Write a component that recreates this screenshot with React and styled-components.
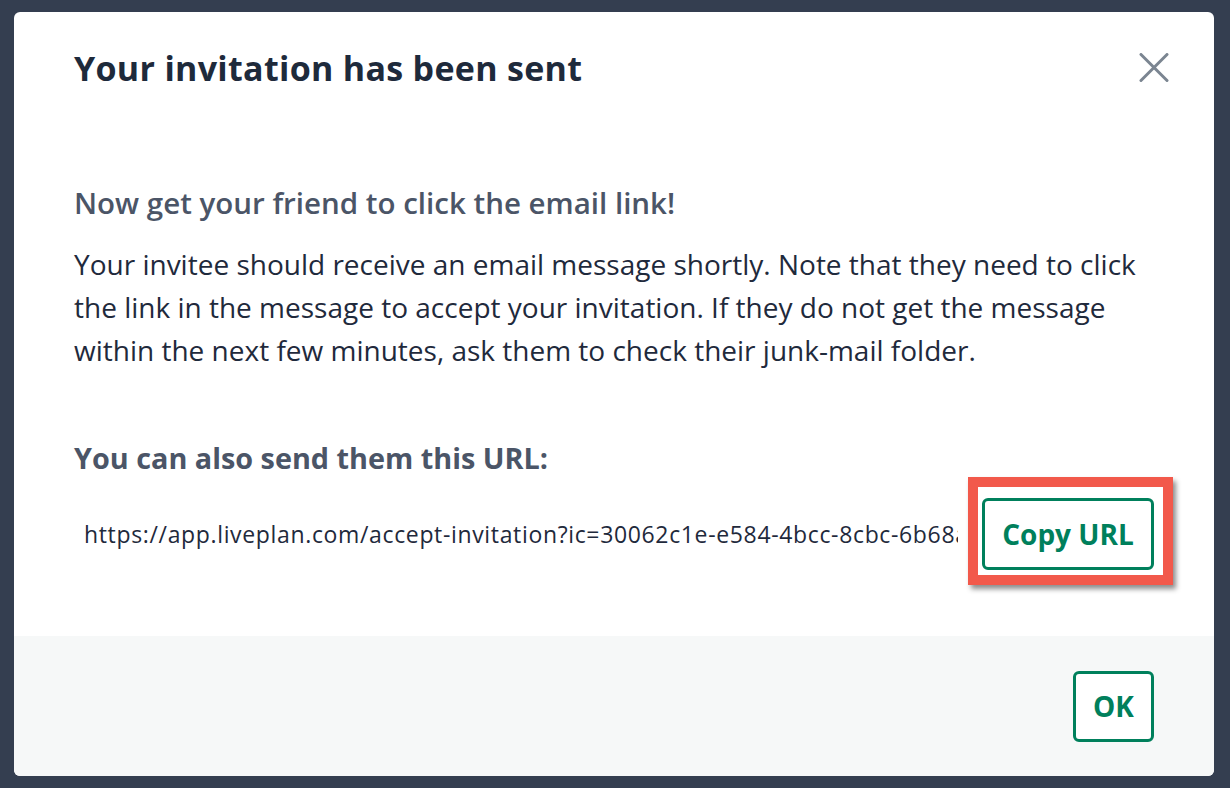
import React from 'react';
import styled, {createGlobalStyle} from 'styled-components';

const GlobalStyle = createGlobalStyle`
    html, body {
        margin: 0;
        padding: 0;
        background: #343e50;
        font-family: "Open Sans", Lato, sans-serif;
    }
`

const Backdrop = styled.div`
    height: 788px;
    padding: 12px 16px 12px 14px;
    box-sizing: border-box;
`

const Modal = styled.div`
    width: 1200px;
    height: 764px;
    background: #fff;
    border-radius: 6px;
    overflow: hidden;
    display: flex;
    flex-direction: column;
`

const Header = styled.div`
    display: flex;
    align-items: center;
    justify-content: space-between;
    padding: 36px 45px 0 60px;
    height: 40px;
`

const Title = styled.h2`
    margin: 0;
    font-size: 34px;
    line-height: 40px;
    font-weight: 700;
    letter-spacing: 0.3px;
    color: #1e2a3b;
`

const CloseButton = styled.button`
    border: 0;
    background: none;
    padding: 0;
    width: 30px;
    height: 30px;
    cursor: pointer;
    display: flex;
    align-items: center;
    justify-content: center;
`

const Body = styled.div`
    flex: 1;
    padding: 0 60px;
    display: flex;
    flex-direction: column;
`

const SubHeading = styled.h3`
    margin: ${p => p.$top}px 0 0;
    font-size: ${p => p.$size}px;
    font-weight: ${p => p.$weight || 700};
    color: #4b5567;
    line-height: 36px;
`

const Paragraph = styled.p`
    margin: 22px 0 0;
    font-size: 28px;
    line-height: 43px;
    color: #1f2a3c;
`

const UrlRow = styled.div`
    display: flex;
    align-items: center;
    gap: 24px;
    margin-top: 22px;
`

// read-only field: the long link is clipped at its right edge
const UrlField = styled.div`
    flex: 1;
    min-width: 0;
    padding: 0 10px;
    font-size: 23px;
    letter-spacing: 0.65px;
    color: #1f2a3c;
    white-space: nowrap;
    overflow: hidden;
`

const Highlight = styled.div`
    position: relative;
    flex-shrink: 0;
    &::after {
        content: '';
        position: absolute;
        left: -14px;
        top: -21px;
        right: -19px;
        bottom: -15px;
        border: 10px solid #f2594b;
        box-shadow: 3px 4px 5px rgba(0, 0, 0, 0.45);
        pointer-events: none;
    }
`

const OutlineButton = styled.button`
    box-sizing: border-box;
    width: ${p => p.$width}px;
    height: ${p => p.$height}px;
    padding: 0;
    border: 3px solid #00805c;
    border-radius: 6px;
    background: #fff;
    color: #00805c;
    font-family: inherit;
    font-size: 28px;
    font-weight: 700;
    cursor: pointer;
`

const Footer = styled.div`
    height: 140px;
    background: #f6f8f8;
    display: flex;
    align-items: center;
    justify-content: flex-end;
    padding: 0 60px;
`

const App = () => {
    return (
        <>
            <GlobalStyle/>
            <Backdrop>
                <Modal>
                    <Header>
                        <Title>Your invitation has been sent</Title>
                        <CloseButton aria-label="Close">
                            <svg width="30" height="30" viewBox="0 0 30 30">
                                <path d="M2 1.5 L28 27.5 M28 1.5 L2 27.5" stroke="#7b8591" strokeWidth="3" strokeLinecap="round"/>
                            </svg>
                        </CloseButton>
                    </Header>
                    <Body>
                        <SubHeading $top={97} $size={29.5} $weight={600}>Now get your friend to click the email link!</SubHeading>
                        <Paragraph>
                            Your invitee should receive an email message shortly. Note that they need to click<br/>
                            the link in the message to accept your invitation. If they do not get the message<br/>
                            within the next few minutes, ask them to check their junk-mail folder.
                        </Paragraph>
                        <SubHeading $top={68} $size={28.8}>You can also send them this URL:</SubHeading>
                        <UrlRow>
                            <UrlField>https://app.liveplan.com/accept-invitation?ic=30062c1e-e584-4bcc-8cbc-6b68a2f0d1e7</UrlField>
                            <Highlight>
                                <OutlineButton $width={172} $height={72}>Copy URL</OutlineButton>
                            </Highlight>
                        </UrlRow>
                    </Body>
                    <Footer>
                        <OutlineButton $width={81} $height={71}>OK</OutlineButton>
                    </Footer>
                </Modal>
            </Backdrop>
        </>
    );
};

export default App;
